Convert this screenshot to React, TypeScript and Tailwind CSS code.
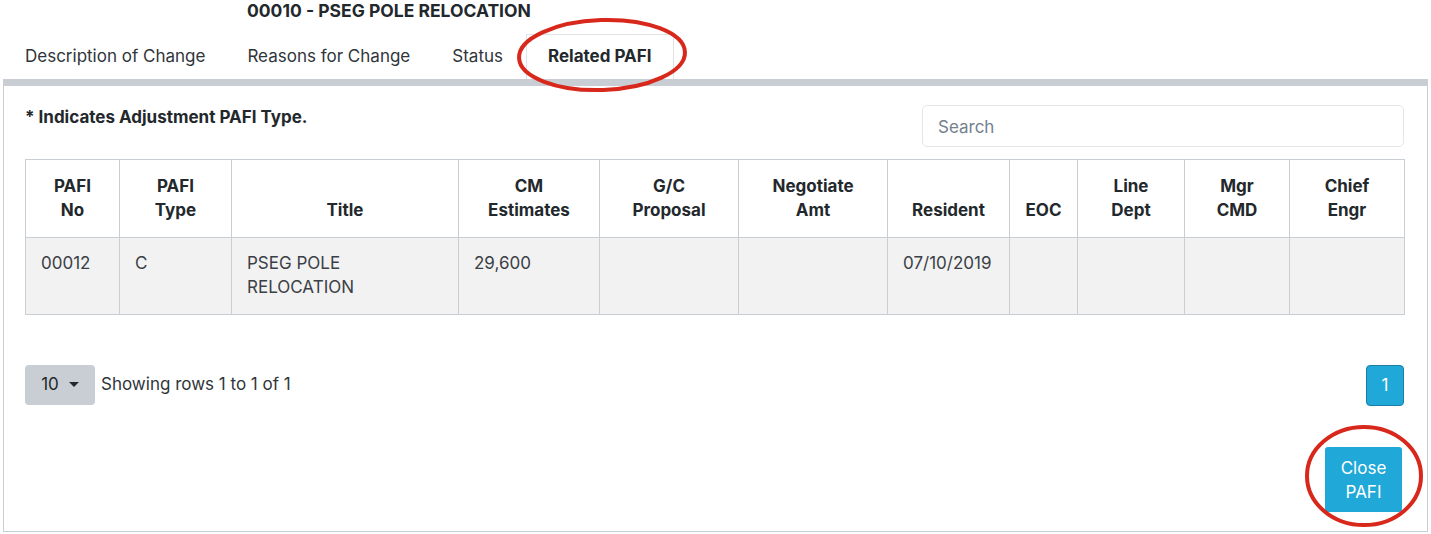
import React from "react";

const cols = [
  { w: "w-[94px]", label: ["PAFI", "No"] },
  { w: "w-[112px]", label: ["PAFI", "Type"] },
  { w: "w-[227px]", label: ["Title"] },
  { w: "w-[141px]", label: ["CM", "Estimates"] },
  { w: "w-[139px]", label: ["G/C", "Proposal"] },
  { w: "w-[149px]", label: ["Negotiate", "Amt"] },
  { w: "w-[122px]", label: ["Resident"] },
  { w: "w-[68px]", label: ["EOC"] },
  { w: "w-[107px]", label: ["Line", "Dept"] },
  { w: "w-[105px]", label: ["Mgr", "CMD"] },
  { w: "w-[115px]", label: ["Chief", "Engr"] },
];

const row = ["00012", "C", "PSEG POLE RELOCATION", "29,600", "", "", "07/10/2019", "", "", "", ""];

const tabs = ["Description of Change", "Reasons for Change", "Status"];

export default function App() {
  return (
    <div className="relative w-[1431px] h-[534px] overflow-hidden bg-white font-['Inter',sans-serif] text-[17px] text-[#23282c]">
      <h1 className="pl-[247px] text-[17.5px] font-bold leading-[22px]">00010 - PSEG POLE RELOCATION</h1>

      <div className="mt-[12px] flex pl-[4px]">
        {tabs.map((t) => (
          <div key={t} className="h-[45px] flex items-center px-[21px] text-[#2f353a]">
            {t}
          </div>
        ))}
        <div className="ml-[2px] h-[45px] flex items-center px-[21px] border border-b-0 border-[#dfe3e6] bg-white font-bold">
          Related PAFI
        </div>
      </div>

      <div className="mx-[3px] h-[453px] border border-t-[7px] border-[#c8ced3] pl-[21px] pr-[23px] pt-[19px] pb-[19px] flex flex-col">
        <div className="flex justify-between items-start">
          <p className="font-bold leading-6">* Indicates Adjustment PAFI Type.</p>
          <input
            placeholder="Search"
            className="w-[482px] h-[42px] rounded-[5px] border border-[#e4e7ea] px-[15px] pt-[2px] text-[17px] placeholder:text-[#73818f] outline-none"
          />
        </div>

        <table className="mt-[12px] w-[1379px] table-fixed border-collapse border border-[#c8ced3]">
          <thead>
            <tr className="h-[78px]">
              {cols.map((c, i) => (
                <th
                  key={i}
                  className={`${c.w} border border-[#c8ced3] px-[12px] pb-[15px] align-bottom text-center font-bold leading-6 text-[#23282c]`}
                >
                  {c.label.map((l) => (
                    <div key={l}>{l}</div>
                  ))}
                </th>
              ))}
            </tr>
          </thead>
          <tbody>
            <tr className="h-[77px] bg-[#f2f2f2]">
              {row.map((v, i) => (
                <td key={i} className="border border-[#c8ced3] px-[15px] pt-[13px] align-top leading-6 text-[#3a4046]">
                  {v}
                </td>
              ))}
            </tr>
          </tbody>
        </table>

        <div className="mt-[50px] flex justify-between items-start">
          <div className="flex items-center">
            <button className="w-[70px] h-[40px] rounded-[4px] bg-[#c8ced3] flex items-center justify-center gap-[10px] text-[#23282c]">
              <span>10</span>
              <svg width="10" height="6" viewBox="0 0 10 6">
                <path d="M0 0 L10 0 L5 5 Z" fill="#23282c" />
              </svg>
            </button>
            <span className="ml-[6px] text-[#2f353a]">Showing rows 1 to 1 of 1</span>
          </div>
          <button className="w-[38px] h-[41px] rounded-[4px] bg-[#20a8d8] border border-[#1b7fa5] text-white">1</button>
        </div>

        <div className="mt-auto flex justify-end pr-[2px]">
          <button className="w-[77px] h-[65px] rounded-[3px] bg-[#20a8d8] text-white leading-6">
            Close
            <br />
            PAFI
          </button>
        </div>
      </div>

      <svg className="absolute inset-0 pointer-events-none" width="1431" height="534">
        <ellipse cx="602" cy="55" rx="83" ry="35" fill="none" stroke="#d8281c" strokeWidth="4" transform="rotate(-2 602 55)" />
        <ellipse cx="1364" cy="476" rx="57" ry="49" fill="none" stroke="#d8281c" strokeWidth="4" />
      </svg>
    </div>
  );
}
